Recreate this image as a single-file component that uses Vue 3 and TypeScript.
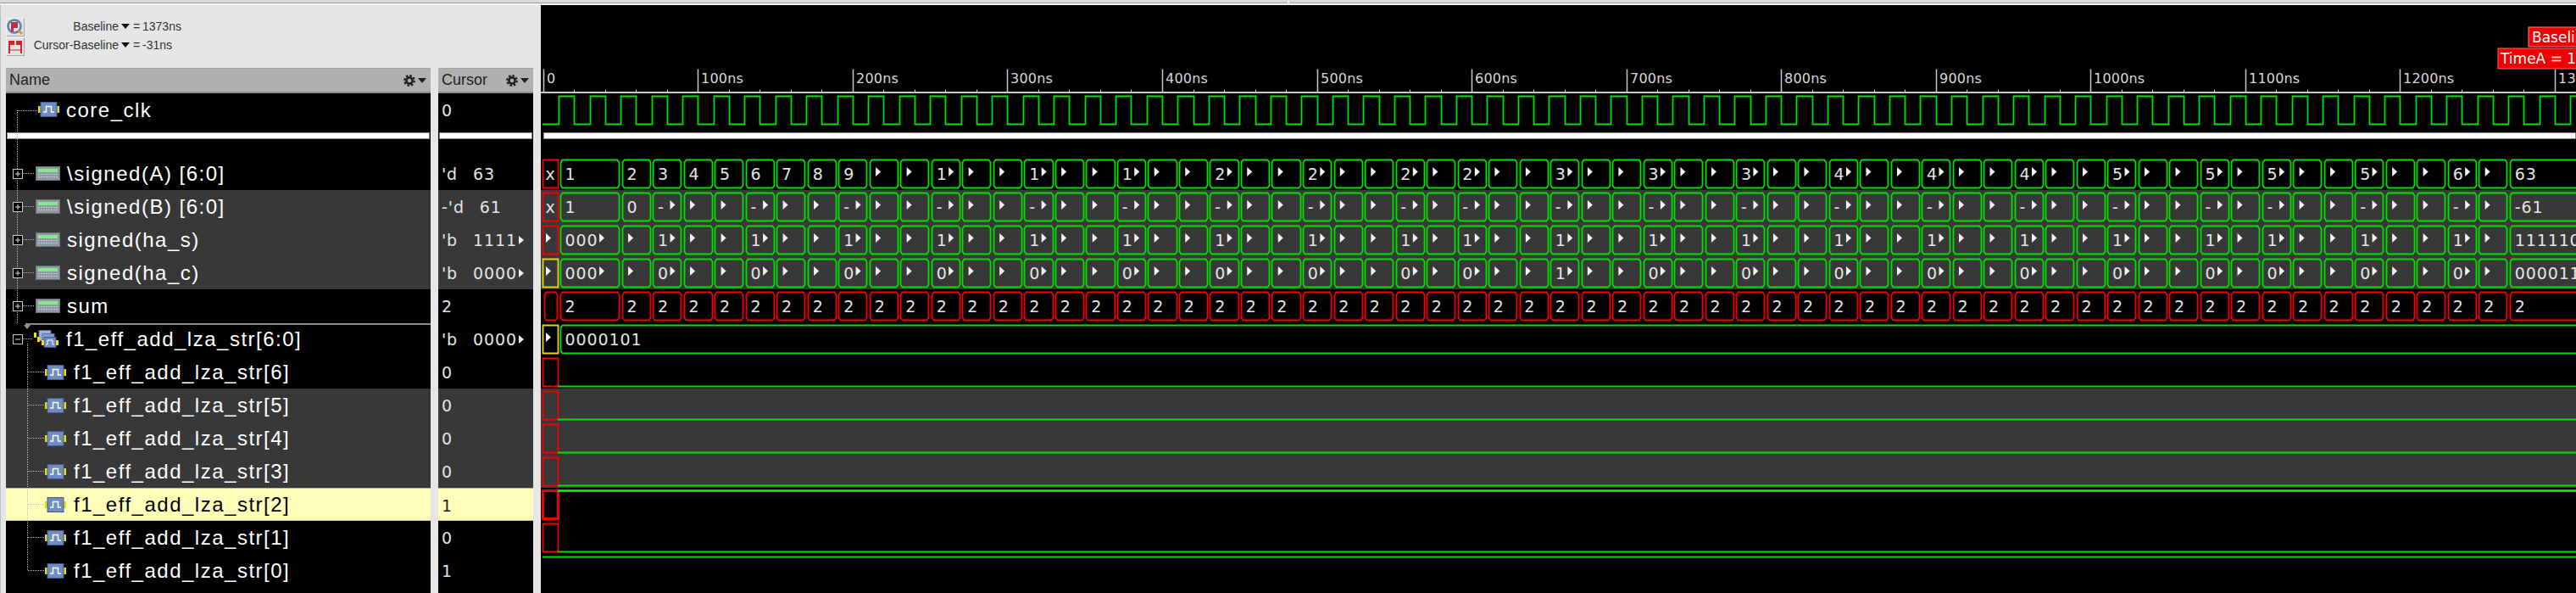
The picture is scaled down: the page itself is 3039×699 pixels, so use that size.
<script setup lang="ts">
interface Box { d: string; tx: number; text: string; triX: number | null }
interface Trace {
  color: string
  head?: 'rect' | 'chamfer'
  headColor?: string
  headMark?: 'x' | 'tri'
  boxes?: Box[]
  level?: 'low' | 'high'
  thick?: boolean
  noHead?: boolean
}
interface Row {
  name: string
  kind: 'bus' | 'leaf2' | 'group'
  cursor: string
  more?: boolean
  band?: boolean
  selected?: boolean
  trace: Trace
}

const GREEN = '#00e000'
const RED = '#f00000'
const YELLOW = '#e8d800'
const WIDTH = 2401
const TOP = 3.5
const BOTTOM = 36.5

// 波形領域の左端(638px)からの相対座標
const ZERO = 2.8
const TICK = 36.51
const edge = (k: number) => ZERO + 18.25 + k * TICK
const snap = (x: number) => Math.round(x) + 0.5

const boxPath = (x0: number, x1: number) => {
  const a = snap(x0 + 1.7)
  const b = snap(x1 - 1.7)
  return `M${a + 2} ${TOP}L${b - 2} ${TOP}L${b} ${TOP + 3}L${b} ${BOTTOM - 3}L${b - 2} ${BOTTOM}L${a + 2} ${BOTTOM}L${a} ${BOTTOM - 3}L${a} ${TOP + 3}Z`
}

const marks = [3, 6, 9, 12, 15, 18, 21, 24, 27, 29, 32, 35, 38, 41, 44, 47, 50, 53, 55, 58, 61]
const starts = [0, ...Array.from({ length: 62 }, (_, i) => i + 2)]

// 末尾の ">" は値が切れている印(三角)
const makeBoxes = (labels: Record<number, string>, fallback: string) =>
  starts.map((k, i): Box => {
    const x0 = edge(k)
    const x1 = i === starts.length - 1 ? WIDTH + 20 : edge(starts[i + 1])
    const raw = labels[k] ?? fallback
    const cut = raw.endsWith('>')
    const text = cut ? raw.slice(0, -1) : raw
    return {
      d: boxPath(x0, x1),
      tx: x0 + 7.5,
      text,
      triX: cut ? x0 + 9 + text.length * 13 : null,
    }
  })

const fill = (value: string, extra: Record<number, string>) => {
  const out: Record<number, string> = {}
  marks.forEach((k) => (out[k] = value))
  return { ...out, ...extra }
}

const tens: Record<number, string> = {
  12: '1>', 15: '1>', 18: '1>', 21: '2>', 24: '2>', 27: '2>', 29: '2>', 32: '3>', 35: '3>', 38: '3>',
  41: '4>', 44: '4>', 47: '4>', 50: '5>', 53: '5>', 55: '5>', 58: '5>', 61: '6>',
}

const aLabels: Record<number, string> = {
  0: '1', 2: '2', 3: '3', 4: '4', 5: '5', 6: '6', 7: '7', 8: '8', 9: '9', 63: '63', ...tens,
}
const bLabels = fill('->', { 0: '1', 2: '0', 63: '-61' })
const sLabels = fill('1>', { 0: '000>', 63: '1111100' })
const cLabels = fill('0>', { 0: '000>', 32: '1>', 63: '0000111' })
const sumLabels: Record<number, string> = {}

const lastBox: Box[] = [{
  d: boxPath(edge(0), WIDTH + 20),
  tx: edge(0) + 7.5,
  text: '0000101',
  triX: null,
}]

const busRows: Row[] = [
  { name: '\\signed(A) [6:0]', kind: 'bus', cursor: "'d 63", trace: { color: GREEN, head: 'rect', headColor: RED, headMark: 'x', boxes: makeBoxes(aLabels, '>') } },
  { name: '\\signed(B) [6:0]', kind: 'bus', cursor: "-'d 61", band: true, trace: { color: GREEN, head: 'rect', headColor: RED, headMark: 'x', boxes: makeBoxes(bLabels, '>') } },
  { name: 'signed(ha_s)', kind: 'bus', cursor: "'b 1111", more: true, band: true, trace: { color: GREEN, head: 'rect', headColor: RED, headMark: 'tri', boxes: makeBoxes(sLabels, '>') } },
  { name: 'signed(ha_c)', kind: 'bus', cursor: "'b 0000", more: true, band: true, trace: { color: GREEN, head: 'rect', headColor: YELLOW, headMark: 'tri', boxes: makeBoxes(cLabels, '>') } },
  { name: 'sum', kind: 'bus', cursor: '2', trace: { color: RED, head: 'chamfer', headColor: RED, boxes: makeBoxes(sumLabels, '2') } },
  { name: 'f1_eff_add_lza_str[6:0]', kind: 'group', cursor: "'b 0000", more: true, trace: { color: GREEN, head: 'rect', headColor: YELLOW, headMark: 'tri', boxes: lastBox } },
  { name: 'f1_eff_add_lza_str[6]', kind: 'leaf2', cursor: '0', trace: { color: GREEN, head: 'rect', headColor: RED, level: 'low' } },
  { name: 'f1_eff_add_lza_str[5]', kind: 'leaf2', cursor: '0', band: true, trace: { color: GREEN, head: 'rect', headColor: RED, level: 'low' } },
  { name: 'f1_eff_add_lza_str[4]', kind: 'leaf2', cursor: '0', band: true, trace: { color: GREEN, head: 'rect', headColor: RED, level: 'low' } },
  { name: 'f1_eff_add_lza_str[3]', kind: 'leaf2', cursor: '0', band: true, trace: { color: GREEN, head: 'rect', headColor: RED, level: 'low' } },
  { name: 'f1_eff_add_lza_str[2]', kind: 'leaf2', cursor: '1', selected: true, trace: { color: GREEN, head: 'rect', headColor: RED, level: 'high', thick: true } },
  { name: 'f1_eff_add_lza_str[1]', kind: 'leaf2', cursor: '0', trace: { color: GREEN, head: 'rect', headColor: RED, level: 'low' } },
  { name: 'f1_eff_add_lza_str[0]', kind: 'leaf2', cursor: '1', trace: { color: GREEN, level: 'high', noHead: true } },
]

const triPoints = (x: number) => `${x},12 ${x + 6},17.5 ${x},23`

const headRect = `M${snap(2)} ${TOP}H${snap(19.6)}V${BOTTOM}H${snap(2)}Z`
const headChamfer = boxPath(2, 20.6)

const levelPath = (t: Trace) => {
  const y = t.level === 'high' ? TOP : BOTTOM
  return `M${t.noHead ? 2 : 20} ${y}H${WIDTH}`
}

// 1目盛り=20ns
let clk = `M2 ${BOTTOM}`
for (let i = 0; i < 66; i++) {
  const rise = snap(edge(i))
  const fall = snap(edge(i) + TICK / 2)
  clk += `H${rise}V${TOP}H${fall}V${BOTTOM}`
}

const majors = Array.from({ length: 14 }, (_, i) => ({
  x: snap(ZERO + i * TICK * 5),
  label: i === 0 ? '0' : `${i * 100}ns`,
}))
const minors = Array.from({ length: 66 }, (_, i) => snap(ZERO + i * TICK)).filter((_, i) => i % 5 !== 0)

// ツリーの点線 [x0, x1, y] (Name列の左上+ヘッダ下が原点)
const branches = [
  [14, 37, 20], [20, 34, 94], [20, 34, 133], [20, 34, 172], [20, 34, 211], [20, 34, 250], [20, 32, 289],
  ...[328, 367, 406, 445, 484, 523, 562].map((y) => [26, 46, y]),
]
</script>

<template>
  <div class="app">
    <div class="strip">
      <div class="strip-part"></div>
      <div class="strip-part"></div>
    </div>
    <div class="main">
      <div class="left">
        <div class="toolbar">
          <div class="tool-icons">
            <button class="tool" type="button">
              <svg width="20" height="20" viewBox="0 0 20 20">
                <circle cx="9" cy="9" r="7.5" fill="#dfe6ee" stroke="#5b7fa8" stroke-width="2.5" />
                <path d="M5 4h8v7H8v4H5z" fill="#c0303a" />
                <path d="M14 14l4 4" stroke="#d89a20" stroke-width="3" />
              </svg>
            </button>
            <button class="tool" type="button">
              <svg width="20" height="20" viewBox="0 0 20 20">
                <path d="M2 3h7v5H4v10H2zM11 3h7v15h-2V8h-5z" fill="#c8282e" />
                <path d="M3 14h14" stroke="#c8282e" stroke-width="1" />
              </svg>
            </button>
          </div>
          <div class="readout">
            <span class="r-label">Baseline</span><i class="r-drop"></i><span class="r-eq">=</span><span>1373ns</span>
            <span class="r-label">Cursor-Baseline</span><i class="r-drop"></i><span class="r-eq">=</span><span>-31ns</span>
          </div>
        </div>

        <div class="columns">
          <div class="col name-col">
            <div class="head">
              <span>Name</span>
              <span class="head-tools">
                <svg width="14" height="14" viewBox="0 0 14 14">
                  <circle cx="7" cy="7" r="3.6" fill="none" stroke="#222" stroke-width="2.6" />
                  <circle cx="7" cy="7" r="5.8" fill="none" stroke="#222" stroke-width="2.2" stroke-dasharray="2.5 2" />
                </svg>
                <i class="head-drop"></i>
              </span>
            </div>
            <div class="clk-row name-row leaf1">
              <svg class="sig" width="25" height="18" viewBox="0 0 25 18">
                <rect x="0" y="5" width="3" height="8" fill="#e8e000" />
                <rect x="22" y="5" width="3" height="8" fill="#e8e000" />
                <rect x="3" y="0.5" width="19" height="17" fill="#6f8cc4" stroke="#45588a" />
                <path d="M6 12H9.5V5.5H15.5V12H19" fill="none" stroke="#fff" stroke-width="1.5" />
              </svg>
              <span class="label">core_clk</span>
            </div>
            <div class="sep"></div>
            <div class="gap"></div>
            <div
              v-for="row in busRows"
              :key="row.name"
              class="row name-row"
              :class="[row.kind, { band: row.band, selected: row.selected }]"
            >
              <svg v-if="row.kind !== 'leaf2'" class="expander" width="12" height="12" viewBox="0 0 12 12">
                <rect x="0.5" y="0.5" width="11" height="11" fill="#000" stroke="#c8c8c8" />
                <path d="M3 6H9" stroke="#e0e0e0" />
                <path v-if="row.kind === 'bus'" d="M6 3V9" stroke="#e0e0e0" />
              </svg>
              <svg v-if="row.kind === 'bus'" class="busicon" width="29" height="17" viewBox="0 0 29 17">
                <rect x="0.5" y="0.5" width="28" height="16" fill="#8f98a3" stroke="#6a727c" />
                <rect x="3" y="3" width="23" height="4" fill="#86e888" />
                <path d="M3 9.5H26M3 12.5H26" stroke="#c4ccd6" stroke-dasharray="2 1" />
              </svg>
              <svg v-else-if="row.kind === 'group'" class="sig" width="29" height="21" viewBox="0 0 29 21">
                <rect x="6" y="0.5" width="14" height="12" fill="#9fb4dc" stroke="#5a70a0" />
                <rect x="10" y="4.5" width="14" height="12" fill="#86a0d2" stroke="#5a70a0" />
                <rect x="12" y="8.5" width="14" height="12" fill="#6f8cc4" stroke="#45588a" />
                <rect x="0" y="3" width="3" height="6" fill="#e8e000" />
                <rect x="4" y="8" width="3" height="6" fill="#e8e000" />
                <rect x="9" y="12" width="3" height="6" fill="#e8e000" />
                <rect x="26" y="12" width="3" height="6" fill="#e8e000" />
                <path d="M14 17H16V12H22V17H24" fill="none" stroke="#fff" />
              </svg>
              <svg v-else class="sig" width="25" height="18" viewBox="0 0 25 18">
                <rect x="0" y="5" width="3" height="8" fill="#e8e000" />
                <rect x="22" y="5" width="3" height="8" fill="#e8e000" />
                <rect x="3" y="0.5" width="19" height="17" fill="#6f8cc4" stroke="#45588a" />
                <path d="M6 12H9.5V5.5H15.5V12H19" fill="none" stroke="#fff" stroke-width="1.5" />
              </svg>
              <span class="label">{{ row.name }}</span>
            </div>

            <!-- グループ区切りと点線はリストの上に重ねる -->
            <div class="group-line"><i></i></div>
            <svg class="tree" width="100" height="589" viewBox="0 0 100 589">
              <g stroke="#b8b8b8" stroke-dasharray="1 1" fill="none">
                <path d="M13.5 20V271M25.5 295V562" />
                <path v-for="b in branches" :key="b[2]" :d="`M${b[0]} ${b[2] + 0.5}H${b[1]}`" />
              </g>
            </svg>
          </div>

          <div class="col cursor-col">
            <div class="head">
              <span>Cursor</span>
              <span class="head-tools">
                <svg width="14" height="14" viewBox="0 0 14 14">
                  <circle cx="7" cy="7" r="3.6" fill="none" stroke="#222" stroke-width="2.6" />
                  <circle cx="7" cy="7" r="5.8" fill="none" stroke="#222" stroke-width="2.2" stroke-dasharray="2.5 2" />
                </svg>
                <i class="head-drop"></i>
              </span>
            </div>
            <div class="clk-row cursor-row">0</div>
            <div class="sep"></div>
            <div class="gap"></div>
            <div
              v-for="row in busRows"
              :key="row.name"
              class="row cursor-row"
              :class="{ band: row.band, selected: row.selected }"
            >
              {{ row.cursor }}<i v-if="row.more" class="more"></i>
            </div>
          </div>
        </div>
      </div>

      <div class="wave">
        <svg class="ruler" :width="WIDTH" height="104" :viewBox="`0 0 ${WIDTH} 104`">
          <rect x="0" y="102" :width="WIDTH" height="2" fill="#c8c8c8" />
          <path v-for="x in minors" :key="x" :d="`M${x} 99.5V102`" stroke="#c8c8c8" />
          <g v-for="m in majors" :key="m.label">
            <path :d="`M${m.x} 75.5V102`" stroke="#c8c8c8" stroke-width="1.5" />
            <text class="ruler-text" :x="m.x + 3.5" y="91.5">{{ m.label }}</text>
          </g>
          <rect x="2345" y="26" width="60" height="23" fill="#f00000" stroke="#ff8080" />
          <text class="flag-text" x="2349" y="44">Baseline = 1373ns</text>
          <rect x="2309" y="51" width="95" height="24" fill="#f00000" stroke="#ff6060" />
          <text class="flag-text" x="2312" y="69">TimeA = 1342ns</text>
        </svg>

        <div class="clk-row">
          <svg class="trace" :width="WIDTH" height="39" :viewBox="`0 0 ${WIDTH} 39`">
            <path :d="clk" fill="none" :stroke="GREEN" stroke-width="1.8" />
          </svg>
        </div>
        <div class="sep wave-sep"></div>
        <div class="gap"></div>

        <div v-for="row in busRows" :key="row.name" class="row" :class="{ band: row.band }">
          <svg class="trace" :width="WIDTH" height="39" :viewBox="`0 0 ${WIDTH} 39`">
            <path
              v-if="row.trace.head === 'rect'"
              :d="headRect"
              fill="none"
              :stroke="row.trace.headColor"
              :stroke-width="row.trace.thick ? 3 : 1.8"
            />
            <path v-if="row.trace.head === 'chamfer'" :d="headChamfer" fill="none" :stroke="row.trace.headColor" stroke-width="1.8" />
            <text v-if="row.trace.headMark === 'x'" class="value" x="5.5" y="27">x</text>
            <polygon v-if="row.trace.headMark === 'tri'" :points="triPoints(6)" fill="#f4f4f4" />
            <template v-for="box in row.trace.boxes" :key="box.tx">
              <path :d="box.d" fill="none" :stroke="row.trace.color" stroke-width="1.8" />
              <text v-if="box.text" class="value" :x="box.tx" y="27">{{ box.text }}</text>
              <polygon v-if="box.triX !== null" :points="triPoints(box.triX)" fill="#f4f4f4" />
            </template>
            <path
              v-if="row.trace.level"
              :d="levelPath(row.trace)"
              fill="none"
              :stroke="row.trace.color"
              :stroke-width="row.trace.thick ? 3 : 1.8"
            />
          </svg>
        </div>
      </div>
    </div>
  </div>
</template>

<style scoped>
  .app {
    width: 3039px;
    height: 699px;
    display: flex;
    flex-direction: column;
    overflow: hidden;
    background: #e6e6e6;
    font-family: "Liberation Sans", Arial, sans-serif;
  }

  .strip {
    height: 6px;
    flex: none;
    display: flex;
    gap: 2px;
    background: #f6f6f6;
  }

  .strip-part {
    height: 4px;
    box-sizing: border-box;
    flex: 1;
    background: #dadada;
    border-bottom: 1px solid #9c9c9c;
  }

  .main {
    flex: 1;
    min-height: 0;
    display: flex;
  }

  .left {
    width: 638px;
    flex: none;
    display: flex;
    flex-direction: column;
    padding-left: 6px;
    box-sizing: border-box;
    border-left: 1px solid #c0c0c0;
  }

  .toolbar {
    height: 74px;
    flex: none;
    display: flex;
    align-items: flex-start;
    padding-top: 15px;
    box-sizing: border-box;
  }

  .tool-icons {
    display: flex;
    flex-direction: column;
    gap: 1px;
  }

  .tool {
    width: 22px;
    height: 22px;
    padding: 0;
    display: flex;
    align-items: center;
    justify-content: center;
    background: #e2e2e2;
    border: 1px solid;
    border-color: #f4f4f4 #a8a8a8 #a8a8a8 #f4f4f4;
  }

  .readout {
    margin-left: 3px;
    margin-top: -1px;
    display: grid;
    grid-template-columns: 108px 14px 14px auto;
    grid-auto-rows: 22px;
    align-items: center;
    font-size: 14px;
    color: #333;
  }

  .r-label {
    text-align: right;
  }

  .r-drop {
    justify-self: end;
    margin-right: 1px;
    width: 0;
    height: 0;
    border-left: 5px solid transparent;
    border-right: 5px solid transparent;
    border-top: 6px solid #111;
  }

  .r-eq {
    padding-left: 3px;
  }

  .columns {
    flex: 1;
    min-height: 0;
    display: flex;
    gap: 9px;
  }

  .col {
    position: relative;
    background: #000;
    overflow: hidden;
  }

  .name-col {
    width: 501px;
    flex: none;
  }

  .cursor-col {
    width: 112px;
    flex: none;
  }

  .head {
    height: 30px;
    box-sizing: border-box;
    display: flex;
    align-items: center;
    justify-content: space-between;
    padding: 0 5px 0 4px;
    background: #b0b0b0;
    border-top: 1px solid #a4a4a4;
    border-bottom: 2px solid #8c8c8c;
    font-size: 18px;
    color: #222;
  }

  .head-tools {
    display: flex;
    align-items: center;
    gap: 3px;
  }

  .head-drop {
    width: 0;
    height: 0;
    border-left: 5.5px solid transparent;
    border-right: 5.5px solid transparent;
    border-top: 6px solid #222;
  }

  .clk-row {
    height: 46px;
    box-sizing: border-box;
  }

  .sep {
    height: 8px;
    margin: 0 1px;
    background: #fff;
    border: 1px solid #8a8a8a;
    box-sizing: border-box;
  }

  .wave-sep {
    margin: 0 0 0 3px;
  }

  .gap {
    height: 21px;
  }

  .row {
    height: 39px;
    box-sizing: border-box;
  }

  .band {
    background: #383838;
  }

  .name-row {
    display: flex;
    color: #fff;
    align-items: center;
    font-size: 24px;
    letter-spacing: 1.5px;
  }

  .name-row.clk-row {
    height: 46px;
    align-items: flex-start;
  }

  .leaf1 {
    padding-left: 38px;
  }

  .leaf1 .sig {
    margin-top: 10px;
  }

  .leaf1 .label {
    line-height: 39px;
  }

  .bus,
  .group {
    padding-left: 8px;
  }

  .leaf2 {
    padding-left: 46px;
  }

  .expander {
    flex: none;
    position: relative;
    z-index: 1;
  }

  .busicon {
    margin-left: 15px;
    flex: none;
  }

  .group .sig {
    margin-left: 13px;
    flex: none;
  }

  .sig {
    flex: none;
  }

  .label {
    margin-left: 8px;
    white-space: nowrap;
  }

  .group .label,
  .leaf2 .label {
    margin-left: 9px;
  }

  .selected {
    background: #ffffb9;
    color: #000;
    border-top: 1px solid #b8b88c;
    border-bottom: 1px solid #c8c890;
  }

  .group-line {
    position: absolute;
    left: 23px;
    right: 0;
    top: 301px;
    height: 2px;
    background: #8a8a8a;
  }

  .group-line i {
    position: absolute;
    left: -2px;
    top: 2px;
    width: 0;
    height: 0;
    border-left: 4px solid transparent;
    border-right: 4px solid transparent;
    border-top: 5px solid #999;
  }

  .tree {
    position: absolute;
    left: 0;
    top: 30px;
    pointer-events: none;
  }

  .cursor-row {
    padding: 0 0 0 4px;
    font-family: "DejaVu Sans", sans-serif;
    font-size: 19px;
    letter-spacing: 0.9px;
    word-spacing: 11px;
    line-height: 41px;
    color: #e4e4e4;
    white-space: nowrap;
  }

  .cursor-row.selected {
    color: #222;
  }

  .more {
    display: inline-block;
    margin-left: 2px;
    width: 0;
    height: 0;
    vertical-align: 2px;
    border-left: 6px solid #eee;
    border-top: 5.5px solid transparent;
    border-bottom: 5.5px solid transparent;
  }

  .wave {
    flex: 1;
    min-width: 0;
    background: #000;
    overflow: hidden;
  }

  .ruler,
  .trace {
    display: block;
  }

  .ruler-text {
    font-family: "DejaVu Sans", sans-serif;
    font-size: 16px;
    letter-spacing: 0.2px;
    fill: #d8d8d8;
  }

  .flag-text {
    font-family: "DejaVu Sans", sans-serif;
    font-size: 17px;
    fill: #fff;
  }

  .value {
    font-family: "DejaVu Sans", sans-serif;
    font-size: 19px;
    letter-spacing: 0.9px;
    fill: #e4e4e4;
  }
</style>

<style>
  html,
  body {
    margin: 0;
    background: #000;
  }
</style>
